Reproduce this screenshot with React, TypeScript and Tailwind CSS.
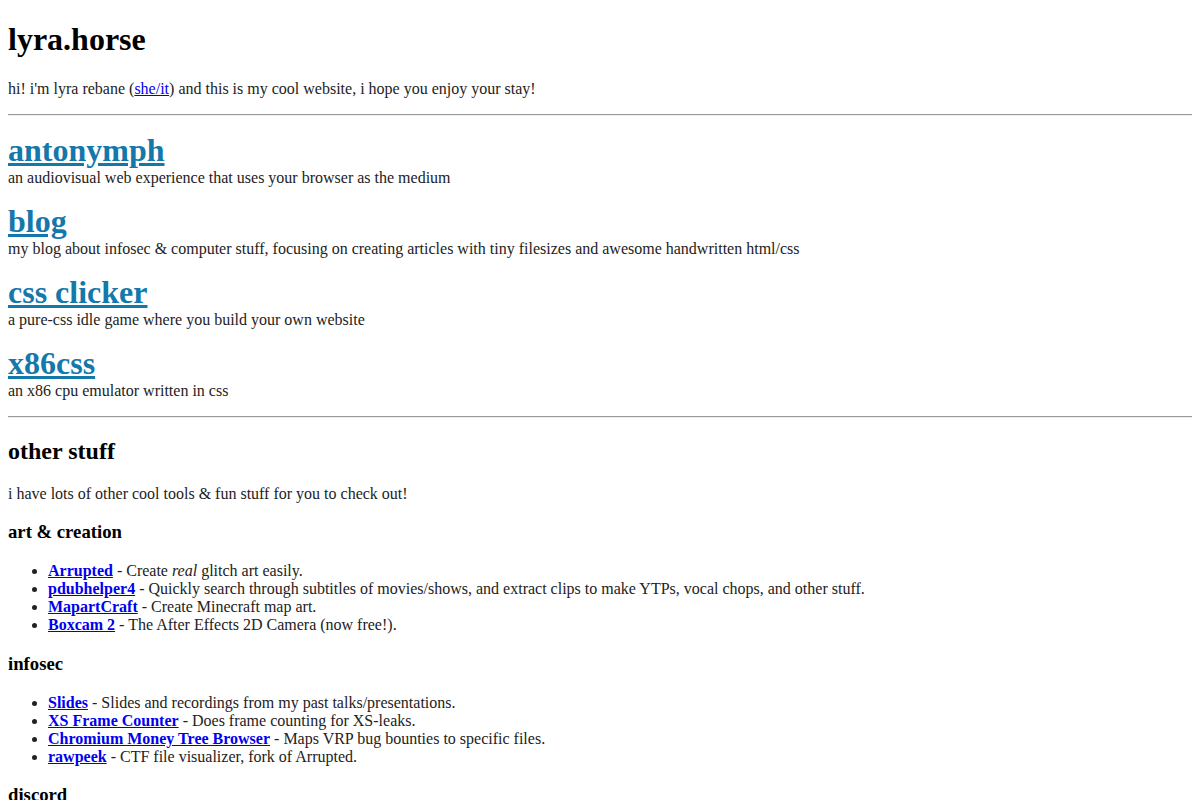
import React from 'react'

const projects = [
  { name: 'antonymph', desc: 'an audiovisual web experience that uses your browser as the medium' },
  { name: 'blog', desc: 'my blog about infosec & computer stuff, focusing on creating articles with tiny filesizes and awesome handwritten html/css' },
  { name: 'css clicker', desc: 'a pure-css idle game where you build your own website' },
  { name: 'x86css', desc: 'an x86 cpu emulator written in css' },
]

function Item({ name, children }: { name: string; children: React.ReactNode }) {
  return (
    <li className="list-disc">
      <a href="#" className="font-bold text-[#0000ee] underline">{name}</a> - {children}
    </li>
  )
}

function Hr() {
  return <hr className="border-0 border-t border-b border-t-[#9a9a9a] border-b-[#eeeeee] h-[2px]" />
}

export default function App() {
  return (
    <div className="bg-white min-h-[800px] px-2 pt-[21px] text-[16px] leading-[normal] text-[#222] font-['Liberation_Serif',serif]">
      <h1 className="text-[32px] font-bold text-black">lyra.horse</h1>
      <p className="mt-[22px]">
        hi! i'm lyra rebane (<a href="#" className="text-[#0000ee] underline">she/it</a>) and this is my cool website, i hope you enjoy your stay!
      </p>
      <div className="mt-4">
        <Hr />
      </div>

      <div className="mt-4 flex flex-col gap-4">
        {projects.map((p) => (
          <div key={p.name}>
            <a href="#" className="block w-fit text-[32px] font-bold text-[#1578aa] underline">{p.name}</a>
            <p>{p.desc}</p>
          </div>
        ))}
      </div>

      <div className="mt-4">
        <Hr />
      </div>

      <h2 className="mt-5 text-[24px] font-bold text-black">other stuff</h2>
      <p className="mt-5">i have lots of other cool tools &amp; fun stuff for you to check out!</p>

      <h3 className="mt-[18px] text-[18.72px] font-bold text-black">art &amp; creation</h3>
      <ul className="mt-[19px] mb-[18.72px] pl-10">
        <Item name="Arrupted">Create <i>real</i> glitch art easily.</Item>
        <Item name="pdubhelper4">Quickly search through subtitles of movies/shows, and extract clips to make YTPs, vocal chops, and other stuff.</Item>
        <Item name="MapartCraft">Create Minecraft map art.</Item>
        <Item name="Boxcam 2">The After Effects 2D Camera (now free!).</Item>
      </ul>

      <h3 className="text-[18.72px] font-bold text-black">infosec</h3>
      <ul className="mt-[19px] mb-[18.72px] pl-10">
        <Item name="Slides">Slides and recordings from my past talks/presentations.</Item>
        <Item name="XS Frame Counter">Does frame counting for XS-leaks.</Item>
        <Item name="Chromium Money Tree Browser">Maps VRP bug bounties to specific files.</Item>
        <Item name="rawpeek">CTF file visualizer, fork of Arrupted.</Item>
      </ul>

      <h3 className="text-[18.72px] font-bold text-black">discord</h3>
    </div>
  )
}
